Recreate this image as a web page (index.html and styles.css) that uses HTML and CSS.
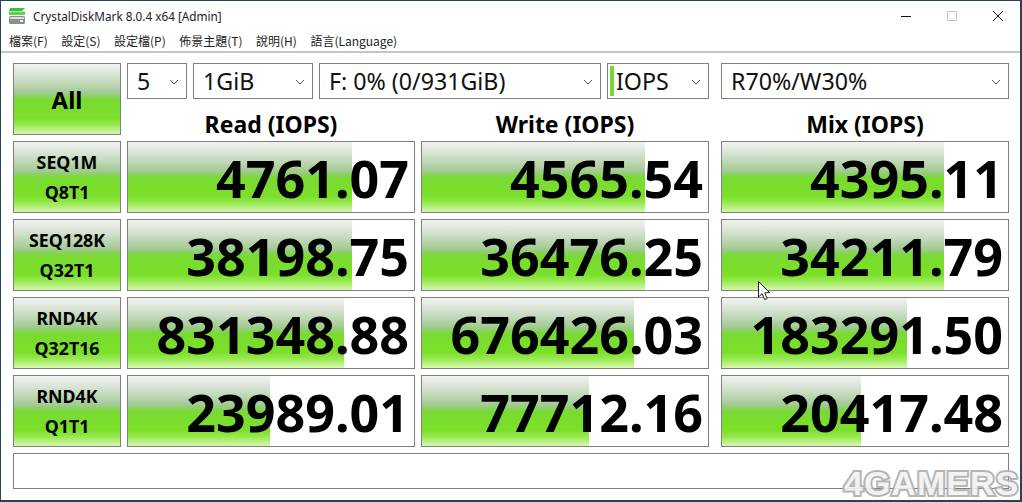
FILE: index.html
```html
<!DOCTYPE html>
<html lang="zh-Hant">
<head>
<meta charset="utf-8">
<title>CrystalDiskMark 8.0.4 x64 [Admin]</title>
<link rel="stylesheet" href="styles.css">
</head>
<body>
<div class="window">
  <header class="titlebar">
    <svg class="app-icon" width="16" height="16" viewBox="0 0 16 16">
      <path d="M1 0h15l-3 3H0z" fill="#3fbf3f"/>
      <path d="M0 3.5h16V7H0z" fill="#5fd04f"/>
      <rect x="0" y="8" width="16" height="8" rx="1.5" fill="#8a8f8f"/>
      <rect x="1" y="9" width="14" height="2" fill="#d8dcdc"/>
      <rect x="11" y="12" width="3" height="2" fill="#e8e8e8"/>
    </svg>
    <span class="title">CrystalDiskMark 8.0.4 x64 [Admin]</span>
    <div class="win-buttons">
      <span class="win-btn"><svg width="10" height="10" viewBox="0 0 10 10"><path d="M0 5.5h10" stroke="#111" fill="none"/></svg></span>
      <span class="win-btn"><svg width="10" height="10" viewBox="0 0 10 10"><rect x=".5" y=".5" width="9" height="9" stroke="#c4c4c4" fill="none"/></svg></span>
      <span class="win-btn"><svg width="10" height="10" viewBox="0 0 10 10"><path d="M0 0l10 10M10 0L0 10" stroke="#111" fill="none"/></svg></span>
    </div>
  </header>
  <nav class="menu">
    <span>檔案(F)</span><span>設定(S)</span><span>設定檔(P)</span><span>佈景主題(T)</span><span>說明(H)</span><span>語言(Language)</span>
  </nav>
  <main class="board">
    <div class="btn all">All</div>
    <div class="top">
      <div class="selects">
        <div class="select s-count">5<svg class="chev" width="10" height="6" viewBox="0 0 10 6"><path d="M1 1l4 4 4-4" stroke="#555" fill="none"/></svg></div>
        <div class="select s-size">1GiB<svg class="chev" width="10" height="6" viewBox="0 0 10 6"><path d="M1 1l4 4 4-4" stroke="#555" fill="none"/></svg></div>
        <div class="select s-drive">F: 0% (0/931GiB)<svg class="chev" width="10" height="6" viewBox="0 0 10 6"><path d="M1 1l4 4 4-4" stroke="#555" fill="none"/></svg></div>
        <div class="select s-unit"><i class="unit-mark"></i>IOPS<svg class="chev" width="10" height="6" viewBox="0 0 10 6"><path d="M1 1l4 4 4-4" stroke="#555" fill="none"/></svg></div>
        <div class="select s-mix">R70%/W30%<svg class="chev" width="10" height="6" viewBox="0 0 10 6"><path d="M1 1l4 4 4-4" stroke="#555" fill="none"/></svg></div>
      </div>
      <div class="heads">
        <div class="head">Read (IOPS)</div>
        <div class="head">Write (IOPS)</div>
        <div class="head mix-col">Mix (IOPS)</div>
      </div>
    </div>

    <div class="btn label">SEQ1M<br>Q8T1</div>
    <div class="score" style="background-size:224px 100%">4761.07</div>
    <div class="score" style="background-size:223px 100%">4565.54</div>
    <div class="score mix-col" style="background-size:222px 100%">4395.11</div>

    <div class="btn label">SEQ128K<br>Q32T1</div>
    <div class="score" style="background-size:224px 100%">38198.75</div>
    <div class="score" style="background-size:223px 100%">36476.25</div>
    <div class="score mix-col" style="background-size:222px 100%">34211.79</div>

    <div class="btn label">RND4K<br>Q32T16</div>
    <div class="score" style="background-size:216px 100%">831348.88</div>
    <div class="score" style="background-size:212px 100%">676426.03</div>
    <div class="score mix-col" style="background-size:185px 100%">183291.50</div>

    <div class="btn label">RND4K<br>Q1T1</div>
    <div class="score" style="background-size:142px 100%">23989.01</div>
    <div class="score" style="background-size:167px 100%">77712.16</div>
    <div class="score mix-col" style="background-size:139px 100%">20417.48</div>

    <div class="message"></div>
  </main>
  <svg class="cursor" width="13" height="20" viewBox="0 0 13 20"><path d="M.5.5v15.5l3.6-3.4 2.5 6 2.6-1.1-2.5-5.8h5z" fill="#fff" stroke="#222"/></svg>
  <div class="watermark">4GAMERS</div>
</div>
</body>
</html>
```

FILE: styles.css
```css
* { box-sizing: border-box; }
html, body { margin: 0; height: 100%; }
body { background: #fff; overflow: hidden; }

.window {
  position: relative;
  width: 1022px;
  height: 502px;
  background: #fff;
  border: solid #24445c;
  border-width: 1px 2px 2px 1px;
  font-family: "Noto Sans", "Noto Sans CJK TC", sans-serif;
  color: #000;
}

.titlebar {
  display: flex;
  align-items: center;
  height: 29px;
  padding-left: 8px;
}
.app-icon { margin-right: 8px; }
.title {
  font-family: "Noto Sans", sans-serif;
  font-size: 11.75px;
  color: #222;
}
.win-buttons { display: flex; margin-left: auto; margin-right: -1px; }
.win-btn {
  display: flex;
  align-items: center;
  justify-content: center;
  width: 46px;
  height: 29px;
}

.menu {
  display: flex;
  gap: 13.5px;
  height: 21px;
  padding-left: 8px;
  align-items: center;
  font-family: "Noto Sans CJK TC", "Noto Sans", sans-serif;
  font-size: 12px;
  color: #222;
  border-bottom: 2px solid #c6c6c6;
  box-sizing: content-box;
}

.board {
  display: grid;
  grid-template-columns: 108px 288px 288px 294px;
  grid-template-rows: repeat(5, 72px) 36px;
  column-gap: 6px;
  row-gap: 6px;
  padding: 10px 0 0 12px;
}

.btn, .score, .select, .message { border: 1px solid #7f7f7f; }

.btn, .score {
  background-color: #fff;
  background-image: linear-gradient(to bottom,
    #f1f3f1 0%, #d8e3d4 16%, #a6cb98 40%, #8ccf68 46%, #79db30 51%,
    #7ce02a 78%, #93e84c 86%, #d6f7ae 100%);
  background-repeat: no-repeat;
}

.btn {
  display: flex;
  align-items: center;
  justify-content: center;
  text-align: center;
  font-weight: 700;
}
.all { font-size: 24px; }
.label { font-size: 17.8px; line-height: 30px; }

.top { grid-column: 2 / 5; display: flex; flex-direction: column; }
.selects { display: flex; gap: 6px; height: 36px; }
.select {
  position: relative;
  display: flex;
  align-items: center;
  height: 36px;
  padding-left: 9px;
  font-size: 23.2px;
  color: #111;
  background: #fff;
}
.chev { position: absolute; right: 7px; top: 15px; }
.s-count { width: 60px; }
.s-size { width: 120px; }
.s-drive { width: 282px; }
.s-unit { width: 102px; padding-left: 2px; }
.s-mix { width: 288px; margin-left: 6px; }
.unit-mark { width: 4px; height: 30px; margin-right: 2px; background: #76d932; }

.heads { display: flex; gap: 6px; height: 36px; }
.head {
  width: 288px;
  padding-top: 7px;
  text-align: center;
  font-size: 23px;
  font-weight: 700;
  line-height: 36px;
}
.mix-col { margin-left: 6px; }

.score {
  padding: 0 5px 0 0;
  text-align: right;
  font-size: 52px;
  font-weight: 700;
  line-height: 71px;
  overflow: hidden;
  white-space: nowrap;
}

.message {
  grid-column: 1 / 5;
  width: 996px;
  background: #fff;
}

.cursor { position: absolute; left: 757px; top: 280px; }

.watermark {
  position: absolute;
  left: 843px;
  top: 466px;
  font-family: "Liberation Sans", sans-serif;
  font-size: 34px;
  font-weight: 700;
  line-height: 32px;
  letter-spacing: 1px;
  color: #f2f2f2;
  -webkit-text-stroke: 4px #adadad;
  paint-order: stroke fill;
  opacity: 0.9;
}
```
